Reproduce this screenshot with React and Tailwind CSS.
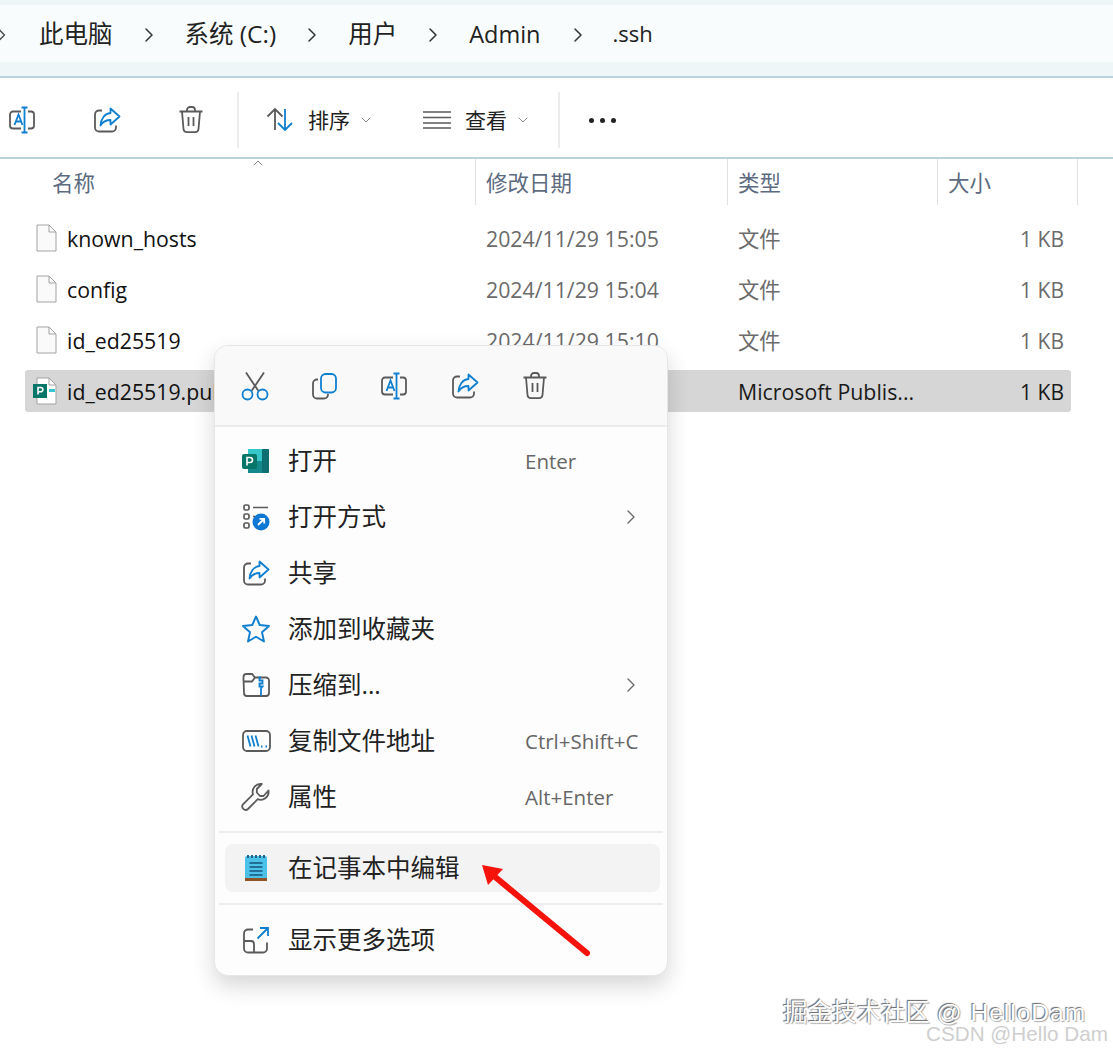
import { ChevronRight, ChevronDown, ChevronUp } from 'lucide-react';

const files = [
  { name: 'known_hosts', date: '2024/11/29 15:05', type: '文件' },
  { name: 'config', date: '2024/11/29 15:04', type: '文件' },
  { name: 'id_ed25519', date: '2024/11/29 15:10', type: '文件' },
  { name: 'id_ed25519.pub', date: '2024/11/29 15:04', type: 'Microsoft Publis...', selected: true },
];

const GRAY = '#5a5a5a';
const BLUE = '#0f7fd0';

function RenameIcon() {
  return (
    <svg width="30" height="30" viewBox="0 0 30 30" fill="none" strokeWidth="1.8">
      <path d="M13 6.5H5a3 3 0 0 0-3 3v11a3 3 0 0 0 3 3h8M20 6.5h3a3 3 0 0 1 3 3v11a3 3 0 0 1-3 3h-3" stroke={GRAY} />
      <path d="M6.5 20 10.5 9.5 14.5 20M8 16.5h5" stroke={BLUE} />
      <path d="M13.5 2.500h6M16.500 2.500v25M13.500 27.500h6" stroke={BLUE} />
    </svg>
  );
}

function ShareIcon() {
  return (
    <svg width="30" height="30" viewBox="0 0 30 30" fill="none" strokeWidth="1.8" strokeLinejoin="round">
      <path d="M10 5.500H7a4 4 0 0 0-4 4v13a4 4 0 0 0 4 4h13a4 4 0 0 0 4-4v-2" stroke={GRAY} />
      <path d="M18.500 3.500 27.500 11.500 18.500 19.500V15C14 15 11 16.500 8.500 20.500 9 14 12.500 8.500 18.500 8Z" stroke={BLUE} />
    </svg>
  );
}

function TrashIcon() {
  return (
    <svg width="30" height="30" viewBox="0 0 30 30" fill="none" stroke={GRAY} strokeWidth="1.8">
      <path d="M3.500 6.500h23M11 6.500V5a3 3 0 0 1 3-3h2a3 3 0 0 1 3 3v1.500" />
      <path d="M6 6.500 7.500 24a3.500 3.500 0 0 0 3.500 3.200h8a3.500 3.500 0 0 0 3.500-3.200L24 6.500" />
      <path d="M12.500 12v9M17.500 12v9" />
    </svg>
  );
}

function CutIcon() {
  return (
    <svg width="30" height="30" viewBox="0 0 30 30" fill="none" strokeWidth="1.8">
      <path d="M6 1.500 18.500 20M24 1.500 11.500 20" stroke={GRAY} />
      <circle cx="7.500" cy="23.500" r="5" stroke={BLUE} />
      <circle cx="22.500" cy="23.500" r="5" stroke={BLUE} />
    </svg>
  );
}

function CopyIcon() {
  return (
    <svg width="30" height="30" viewBox="0 0 30 30" fill="none" strokeWidth="1.8">
      <rect x="11" y="3" width="15" height="18.500" rx="4.500" stroke={BLUE} />
      <path d="M8 8.500H7a4 4 0 0 0-4 4v11a4 4 0 0 0 4 4h7a4 4 0 0 0 4-4v-.5" stroke={GRAY} />
    </svg>
  );
}

function PublisherIcon() {
  return (
    <svg width="30" height="30" viewBox="0 0 30 30">
      <rect x="7" y="3" width="21" height="24" rx="2" fill="#1fa5a8" />
      <rect x="7" y="3" width="14" height="12" fill="#37c6c8" />
      <rect x="21" y="3" width="7" height="24" rx="1" fill="#0f6e72" />
      <rect x="7" y="15" width="14" height="12" fill="#13898c" />
      <rect x="1" y="8" width="15" height="15" rx="2" fill="#077568" />
      <path d="M6 19.500V11.500h3a2.400 2.400 0 0 1 0 5H6" fill="none" stroke="#fff" strokeWidth="1.600" />
    </svg>
  );
}

function OpenWithIcon() {
  return (
    <svg width="30" height="30" viewBox="0 0 30 30" fill="none" strokeWidth="1.700">
      <rect x="3" y="3" width="5" height="5" rx="1.500" stroke={GRAY} />
      <rect x="3" y="12" width="5" height="5" rx="1.500" stroke={GRAY} />
      <rect x="3" y="21" width="5" height="5" rx="1.500" stroke={GRAY} />
      <path d="M12 5.500h15M12 14.500h2" stroke={GRAY} />
      <circle cx="20" cy="20" r="8.500" fill="#0f78d4" />
      <path d="M17 23l6-6M18.500 16.800h4.700v4.700" stroke="#fff" strokeWidth="1.800" />
    </svg>
  );
}

function StarIcon() {
  return (
    <svg width="30" height="30" viewBox="0 0 30 30" fill="none" stroke={BLUE} strokeWidth="1.900" strokeLinejoin="round">
      <path d="M15 2.500 18.700 11 28 12 21 18.200 23 27.500 15 22.700 7 27.500 9 18.200 2 12 11.300 11Z" />
    </svg>
  );
}

function ZipIcon() {
  return (
    <svg width="30" height="30" viewBox="0 0 30 30" fill="none" strokeWidth="1.800">
      <path d="M2.500 9V7a3 3 0 0 1 3-3h5.500l3 3.500h11a3 3 0 0 1 3 3V23a3 3 0 0 1-3 3h-19a3 3 0 0 1-3-3Z" stroke={GRAY} />
      <path d="M2.500 11.500H11l3-4" stroke={GRAY} />
      <path d="M20 7.500h-1.500v3h3v3h-3v3h3l-1.500 2v7" stroke={BLUE} />
    </svg>
  );
}

function PathIcon() {
  return (
    <svg width="30" height="30" viewBox="0 0 30 30" fill="none" strokeWidth="1.800">
      <rect x="2" y="5" width="27" height="20" rx="4" stroke={GRAY} />
      <path d="M6.500 9.500 9.500 20.500M10.500 9.500 13.500 20.500M14.500 9.500 17.500 20.500" stroke={BLUE} />
      <path d="M20 20.500h1.500M24.500 20.500H26" stroke={BLUE} strokeWidth="2" />
    </svg>
  );
}

function WrenchIcon() {
  return (
    <svg width="30" height="30" viewBox="0 0 30 30" fill="none" stroke={GRAY} strokeWidth="1.800" strokeLinejoin="round">
      <path d="M27.500 8.500a8 8 0 0 1-10.800 8.700L7 27a3.400 3.400 0 0 1-4.800-4.800l9.800-9.800A8 8 0 0 1 20.800 2l-5 5v3.500L19 14h3.500l5-5.500Z" />
    </svg>
  );
}

function NotepadIcon() {
  return (
    <svg width="30" height="30" viewBox="0 0 30 30">
      <path d="M6 3h18a2 2 0 0 1 2 2v20H4V5a2 2 0 0 1 2-2Z" fill="#4cc2ea" />
      <rect x="4" y="25" width="22" height="3" fill="#8f5524" />
      <path d="M7 2v3M11 2v3M15 2v3M19 2v3M23 2v3" stroke="#1a5a7c" strokeWidth="1.800" />
      <path d="M8.500 10h13M8.500 14h13M8.500 18h13M8.500 22h13" stroke="#14567a" strokeWidth="1.300" />
    </svg>
  );
}

function MoreOptionsIcon() {
  return (
    <svg width="30" height="30" viewBox="0 0 30 30" fill="none" strokeWidth="1.800">
      <path d="M12 4.500H7a4 4 0 0 0-4 4v15a4 4 0 0 0 4 4h15a4 4 0 0 0 4-4v-6" stroke={GRAY} />
      <path d="M3 16h7a3 3 0 0 1 3 3v8.500" stroke={GRAY} />
      <path d="M19 3h8v8M27 3 16.500 13.500" stroke={BLUE} />
    </svg>
  );
}

function SortIcon() {
  return (
    <svg width="30" height="30" viewBox="0 0 30 30" fill="none" strokeWidth="1.800">
      <path d="M10 25V4M2.500 11.500 10 4l7.500 7.500" stroke={GRAY} />
      <path d="M20 4v21M13 18l7 7 7-7" stroke={BLUE} />
    </svg>
  );
}

function ViewIcon() {
  return (
    <svg width="30" height="20" viewBox="0 0 30 20" fill="none" stroke={GRAY} strokeWidth="1.700">
      <path d="M1 2h28M1 7.500h28M1 13h28M1 18h28" />
    </svg>
  );
}

function FileIcon({ publisher }) {
  return (
    <div className="relative flex h-[28px] w-[24px] shrink-0 items-center justify-center">
      <svg width="24" height="28" viewBox="0 0 24 28" fill="none">
        <path d="M4 1h12l7 7v19H4Z" fill={publisher ? '#fff' : '#fafafa'} stroke="#a3a3a3" strokeWidth="1" />
        <path d="M16 1v7h7" stroke="#a3a3a3" strokeWidth="1" />
        {publisher && <rect x="0" y="7" width="14" height="14" fill="#077568" />}
        {publisher && <path d="M5 17.500V10.500h2.800a2.100 2.100 0 0 1 0 4.200H5" stroke="#fff" strokeWidth="1.600" />}
        {publisher && <rect x="16" y="12" width="6" height="3" fill="#37c6d0" />}
      </svg>
    </div>
  );
}

function MenuRow({ icon, label, shortcut, arrow, active }) {
  return (
    <div className={`flex h-12 items-center rounded-lg pr-[19px] pl-4 ${active ? 'bg-[#f3f3f3]' : ''}`}>
      <div className="flex w-[47px] shrink-0 items-center">{icon}</div>
      <span className="text-[24.500px] leading-none text-[#222]">{label}</span>
      {shortcut && <span className="ml-auto w-[116px] text-[20.500px] whitespace-nowrap text-[#666]">{shortcut}</span>}
      {arrow && <ChevronRight className="-mr-[2px] ml-auto h-6 w-6 text-[#666]" strokeWidth={1.300} />}
    </div>
  );
}

function ContextMenu() {
  return (
    <div className="absolute top-[345px] left-[214px] w-[454px] overflow-hidden rounded-[14px] border border-[#e6e6e6] bg-[#fdfdfd] shadow-[0_10px_22px_rgba(0,0,0,0.16)]">
      <div className="flex h-[81px] items-center gap-10 border-b-2 border-[#ececec] bg-[#f9f9f9] pl-[25px]">
        <CutIcon />
        <CopyIcon />
        <RenameIcon />
        <ShareIcon />
        <TrashIcon />
      </div>
      <div className="flex flex-col gap-2 pt-[10px] pr-[7px] pl-[10px]">
        <MenuRow icon={<PublisherIcon />} label="打开" shortcut="Enter" />
        <MenuRow icon={<OpenWithIcon />} label="打开方式" arrow />
        <MenuRow icon={<ShareIcon />} label="共享" />
        <MenuRow icon={<StarIcon />} label="添加到收藏夹" />
        <MenuRow icon={<ZipIcon />} label="压缩到..." arrow />
        <MenuRow icon={<PathIcon />} label="复制文件地址" shortcut="Ctrl+Shift+C" />
        <MenuRow icon={<WrenchIcon />} label="属性" shortcut="Alt+Enter" />
      </div>
      <div className="mx-[4px] mt-[10px] h-[2px] bg-[#eeeeee]" />
      <div className="pt-[11px] pr-[7px] pl-[10px]">
        <MenuRow icon={<NotepadIcon />} label="在记事本中编辑" active />
      </div>
      <div className="mx-[4px] mt-[11px] h-[2px] bg-[#eeeeee]" />
      <div className="py-[11px] pr-[7px] pl-[10px]">
        <MenuRow icon={<MoreOptionsIcon />} label="显示更多选项" />
      </div>
    </div>
  );
}

export default function App() {
  const crumbs = ['系统 (C:)', '用户'];

  return (
    <div
      className="relative h-[1054px] w-[1113px] overflow-hidden bg-white text-[#1f1f1f]"
      style={{ fontFamily: '"Open Sans", "Noto Sans CJK SC", sans-serif' }}
    >
      {/* address bar */}
      <div className="h-[78px] border-b-2 border-[#b9d3dd] bg-[#eef6f8] pt-[5px]">
        <div className="flex h-[57px] items-center bg-[#f8fcfd] pt-[2px] text-[24.500px] leading-none text-[#222]">
          <ChevronRight className="-ml-[8px] h-5 w-5 text-[#444]" strokeWidth={1.500} />
          <span className="ml-[27px]">此电脑</span>
          {crumbs.map((c) => (
            <div key={c} className="flex items-center">
              <ChevronRight className="mx-[24px] h-6 w-6 text-[#333]" strokeWidth={1.500} />
              <span>{c}</span>
            </div>
          ))}
          <ChevronRight className="mx-[24px] h-6 w-6 text-[#333]" strokeWidth={1.500} />
          <span className="text-[23.500px]">Admin</span>
          <ChevronRight className="mr-[23px] ml-[25px] h-6 w-6 text-[#333]" strokeWidth={1.500} />
          <span className="pb-[3px] text-[22px]">.ssh</span>
        </div>
      </div>

      {/* toolbar */}
      <div className="flex h-[81px] items-center border-b-2 border-[#b9d3dd] bg-white pt-[5px]">
        <div className="ml-2 flex items-center gap-[54px]">
          <RenameIcon />
          <ShareIcon />
          <TrashIcon />
        </div>
        <div className="mr-[26px] ml-[31px] h-[56px] w-[2px] bg-[#ececec]" />
        <SortIcon />
        <span className="ml-[13px] text-[21px] leading-none">排序</span>
        <ChevronDown className="ml-[8px] h-4 w-4 text-[#888]" strokeWidth={1.500} />
        <div className="ml-[48px]"><ViewIcon /></div>
        <span className="ml-[13px] text-[21px] leading-none">查看</span>
        <ChevronDown className="ml-[8px] h-4 w-4 text-[#888]" strokeWidth={1.500} />
        <div className="ml-[27px] h-[56px] w-[2px] bg-[#ececec]" />
        <div className="ml-[29px] flex gap-[6px]">
          <div className="h-[5px] w-[5px] rounded-full bg-[#222]" />
          <div className="h-[5px] w-[5px] rounded-full bg-[#222]" />
          <div className="h-[5px] w-[5px] rounded-full bg-[#222]" />
        </div>
      </div>

      {/* column headers */}
      <div className="relative grid h-[46px] w-[1078px] grid-cols-[476px_252px_210px_140px] text-[21.500px] text-[#5c6b80]">
        <ChevronUp className="absolute -top-[4px] left-[250px] h-4 w-4 text-[#777]" strokeWidth={1.300} />
        <div className="flex items-center border-r border-[#dfe3e6] pt-[3px] pl-[52px]">名称</div>
        <div className="flex items-center border-r border-[#dfe3e6] pt-[3px] pl-[10px]">修改日期</div>
        <div className="flex items-center border-r border-[#dfe3e6] pt-[3px] pl-[10px]">类型</div>
        <div className="flex items-center border-r border-[#dfe3e6] pt-[3px] pl-[10px]">大小</div>
      </div>

      {/* file list */}
      <div className="mx-[25px] mt-3 flex w-[1046px] flex-col gap-[9px]">
        {files.map((f) => (
          <div
            key={f.name}
            className={`grid h-[42px] grid-cols-[461px_252px_1fr_auto] items-center rounded-[3px] pr-[7px] text-[21.300px] leading-none ${f.selected ? 'bg-[#d6d6d6] text-[#1a1a1a]' : 'text-[#6b6b6b]'}`}
          >
            <div className="flex items-center gap-[10px] pl-[8px]">
              <FileIcon publisher={f.selected} />
              <span className="pt-[2px] text-[#111]">{f.name}</span>
            </div>
            <span className="pt-[2px]">{f.date}</span>
            <span className="pt-[2px] whitespace-nowrap">{f.type}</span>
            <span className="pt-[2px] text-right text-[21px]">1 KB</span>
          </div>
        ))}
      </div>

      <ContextMenu />

      {/* annotation arrow */}
      <svg className="absolute top-[860px] left-[478px]" width="116" height="100" viewBox="0 0 116 100" fill="none">
        <path d="M109 93 16 16" stroke="#f5130c" strokeWidth="6" strokeLinecap="round" />
        <path d="M4 5 25 9 10 25Z" fill="#f5130c" />
      </svg>

      {/* watermarks */}
      <div className="absolute top-[1002px] left-[783px] font-['Liberation_Sans','Noto_Sans_CJK_SC',sans-serif] text-[24.500px] leading-[22px] whitespace-nowrap text-white [text-shadow:-1px_-1px_1px_#666,1px_1px_1px_#aaa]">
        掘金技术社区 <span className="tracking-[1px]">@ HelloDam</span>
      </div>
      <div className="absolute top-[1024px] left-[926px] font-['Liberation_Sans'] text-[20.700px] leading-[20px] whitespace-nowrap text-[#cfcfcf]">
        CSDN @Hello Dam
      </div>
    </div>
  );
}
